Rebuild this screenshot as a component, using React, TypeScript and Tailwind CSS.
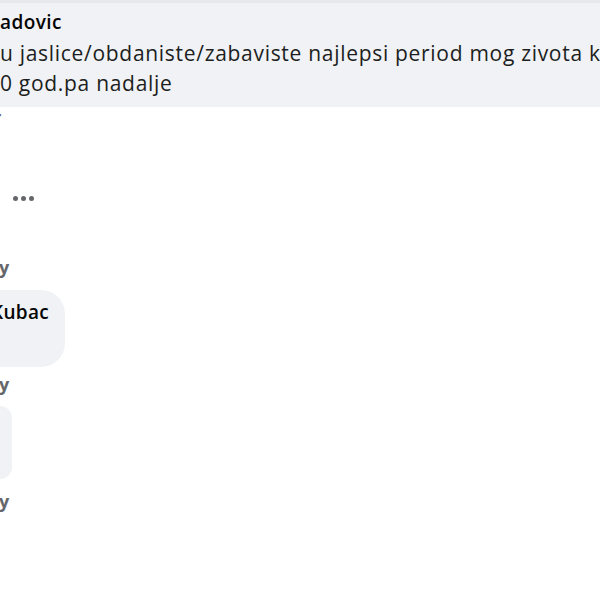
import React from 'react';

const font = { fontFamily: '"Open Sans", "Noto Sans", sans-serif' };

export default function App() {
  return (
    <div className="w-[600px] h-[600px] overflow-hidden bg-white text-[#050505]" style={font}>
      <div className="h-[3px] bg-[#e6e8eb]" />
      {/* first comment bubble, cut on both sides */}
      <div className="bg-[#f0f2f5] h-[104px] pt-[7px] whitespace-nowrap">
        <div className="text-[19px] leading-[24px] font-semibold tracking-[0.4px]">adovic</div>
        <div className="text-[21px] leading-[30px] mt-[4px] text-[#1c1e21] tracking-[0.7px]">
          u jaslice/obdaniste/zabaviste najlepsi period mog zivota k
        </div>
        <div className="text-[21px] leading-[30px] text-[#1c1e21] tracking-[0.7px]">0 god.pa nadalje</div>
      </div>
      <div className="h-[20px] overflow-hidden">
        <span className="block -ml-[6px] text-[16px] leading-[20px] font-bold text-[#65676b]">r</span>
      </div>
      <div className="mt-[69px] pl-[13px] flex gap-[3px]">
        <span className="w-[5px] h-[5px] rounded-full bg-[#65676b]" />
        <span className="w-[5px] h-[5px] rounded-full bg-[#65676b]" />
        <span className="w-[5px] h-[5px] rounded-full bg-[#65676b]" />
      </div>
      <div className="mt-[55px] text-[18px] leading-[22px] font-bold text-[#65676b] -ml-[1px]">y</div>
      {/* reply bubble */}
      <div className="mt-[12px] w-[65px] h-[77px] bg-[#f0f2f5] rounded-r-[24px] overflow-hidden pt-[10px]">
        <div className="-ml-[9px] text-[19px] leading-[24px] font-semibold whitespace-nowrap tracking-[0.3px]">Kubac</div>
      </div>
      <div className="mt-[6px] text-[18px] leading-[22px] font-bold text-[#65676b] -ml-[1px]">y</div>
      <div className="mt-[11px] w-[12px] h-[73px] bg-[#f0f2f5] rounded-r-[22px]" />
      <div className="mt-[11px] text-[18px] leading-[22px] font-bold text-[#65676b] -ml-[1px]">y</div>
    </div>
  );
}
